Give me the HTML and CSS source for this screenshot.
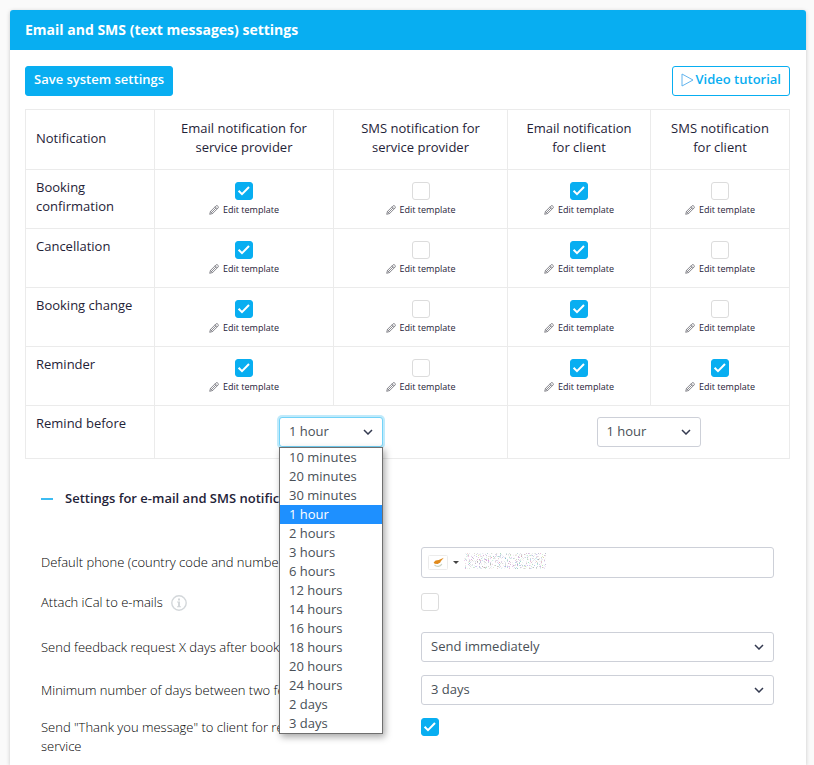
FILE: index.html
```html
<!doctype html>
<html lang="en">
<head>
    <meta charset="utf-8">
    <title>Email and SMS settings</title>
    <meta name="viewport" content="width=device-width, initial-scale=1">
    <link rel="stylesheet" href="styles.css">
</head>

<body>
<svg class="sprite" aria-hidden="true">
    <symbol id="pencil" viewBox="0 0 10 10">
        <path d="M.7 9.3l.8-2.9L7 .9q.9-.7 1.7.1l.4.4q.7.8 0 1.6L3.6 8.5z M1.5 6.4l2.1 2.1 M6.1 1.8l2.1 2.1 M2.6 7.4L7.1 2.9"/>
    </symbol>
</svg>

<main class="panel">
    <h1 class="panel-header">Email and SMS (text messages) settings</h1>

    <form class="panel-body" action="#" method="post">
        <div class="toolbar">
            <button type="submit" class="btn btn-primary">Save system settings</button>
            <a href="#" class="btn btn-outline">
                <svg class="play" viewBox="0 0 13 14"><path d="M1 1v12l11-6z"/></svg>Video tutorial</a>
        </div>

        <table class="notifications">
            <colgroup>
                <col class="col-name">
                <col class="col-email-provider">
                <col class="col-sms-provider">
                <col class="col-email-client">
                <col class="col-sms-client">
            </colgroup>
            <thead>
            <tr>
                <th scope="col" class="name">Notification</th>
                <th scope="col">Email notification for service provider</th>
                <th scope="col">SMS notification for service provider</th>
                <th scope="col">Email notification for&nbsp;client</th>
                <th scope="col">SMS notification for&nbsp;client</th>
            </tr>
            </thead>
            <tbody>
            <tr>
                <th scope="row">Booking confirmation</th>
                <td><input type="checkbox" class="check" aria-label="Booking confirmation, email to provider" checked><a href="#" class="edit"><svg><use href="#pencil"/></svg>Edit template</a></td>
                <td><input type="checkbox" class="check" aria-label="Booking confirmation, SMS to provider"><a href="#" class="edit"><svg><use href="#pencil"/></svg>Edit template</a></td>
                <td><input type="checkbox" class="check" aria-label="Booking confirmation, email to client" checked><a href="#" class="edit"><svg><use href="#pencil"/></svg>Edit template</a></td>
                <td><input type="checkbox" class="check" aria-label="Booking confirmation, SMS to client"><a href="#" class="edit"><svg><use href="#pencil"/></svg>Edit template</a></td>
            </tr>
            <tr>
                <th scope="row">Cancellation</th>
                <td><input type="checkbox" class="check" aria-label="Cancellation, email to provider" checked><a href="#" class="edit"><svg><use href="#pencil"/></svg>Edit template</a></td>
                <td><input type="checkbox" class="check" aria-label="Cancellation, SMS to provider"><a href="#" class="edit"><svg><use href="#pencil"/></svg>Edit template</a></td>
                <td><input type="checkbox" class="check" aria-label="Cancellation, email to client" checked><a href="#" class="edit"><svg><use href="#pencil"/></svg>Edit template</a></td>
                <td><input type="checkbox" class="check" aria-label="Cancellation, SMS to client"><a href="#" class="edit"><svg><use href="#pencil"/></svg>Edit template</a></td>
            </tr>
            <tr>
                <th scope="row">Booking change</th>
                <td><input type="checkbox" class="check" aria-label="Booking change, email to provider" checked><a href="#" class="edit"><svg><use href="#pencil"/></svg>Edit template</a></td>
                <td><input type="checkbox" class="check" aria-label="Booking change, SMS to provider"><a href="#" class="edit"><svg><use href="#pencil"/></svg>Edit template</a></td>
                <td><input type="checkbox" class="check" aria-label="Booking change, email to client" checked><a href="#" class="edit"><svg><use href="#pencil"/></svg>Edit template</a></td>
                <td><input type="checkbox" class="check" aria-label="Booking change, SMS to client"><a href="#" class="edit"><svg><use href="#pencil"/></svg>Edit template</a></td>
            </tr>
            <tr>
                <th scope="row">Reminder</th>
                <td><input type="checkbox" class="check" aria-label="Reminder, email to provider" checked><a href="#" class="edit"><svg><use href="#pencil"/></svg>Edit template</a></td>
                <td><input type="checkbox" class="check" aria-label="Reminder, SMS to provider"><a href="#" class="edit"><svg><use href="#pencil"/></svg>Edit template</a></td>
                <td><input type="checkbox" class="check" aria-label="Reminder, email to client" checked><a href="#" class="edit"><svg><use href="#pencil"/></svg>Edit template</a></td>
                <td><input type="checkbox" class="check" aria-label="Reminder, SMS to client" checked><a href="#" class="edit"><svg><use href="#pencil"/></svg>Edit template</a></td>
            </tr>
            <tr>
                <th scope="row">Remind before</th>
                <td colspan="2">
                    <div class="dropdown">
                        <select class="select select-open" aria-label="Remind provider before">
                            <option>1 hour</option>
                        </select>
                        <ul class="dropdown-menu" role="listbox" aria-label="Remind provider before">
                            <li role="option">10 minutes</li>
                            <li role="option">20 minutes</li>
                            <li role="option">30 minutes</li>
                            <li role="option" class="active" aria-selected="true">1 hour</li>
                            <li role="option">2 hours</li>
                            <li role="option">3 hours</li>
                            <li role="option">6 hours</li>
                            <li role="option">12 hours</li>
                            <li role="option">14 hours</li>
                            <li role="option">16 hours</li>
                            <li role="option">18 hours</li>
                            <li role="option">20 hours</li>
                            <li role="option">24 hours</li>
                            <li role="option">2 days</li>
                            <li role="option">3 days</li>
                        </ul>
                    </div>
                </td>
                <td colspan="2">
                    <div class="dropdown">
                        <select class="select" aria-label="Remind client before">
                            <option>1 hour</option>
                        </select>
                    </div>
                </td>
            </tr>
            </tbody>
        </table>

        <section class="more">
            <h2 class="more-title"><span class="minus"></span>Settings for e-mail and SMS notifications</h2>

            <div class="row">
                <label for="phone">Default phone (country code and number)</label>
                <div class="phone">
                    <button type="button" class="country" aria-label="Country code">
                        <svg class="flag" viewBox="0 0 20 15">
                            <rect x=".5" y=".5" width="19" height="14" rx="1" fill="#fff" stroke="#ececec"/>
                            <path d="M5.6 7.6l2-2 3.2-.5 5-2.3-3 3.4-.5 1.4-2.6 1.3-3-.2z" fill="#e08a1c"/>
                            <path d="M6.5 9.8q1.5 1.8 4 1.5 2.6-.4 3.3-2.4" fill="none" stroke="#c9d3c6" stroke-width="1.3"/>
                        </svg>
                        <span class="caret"></span>
                    </button>
                    <svg class="scramble" aria-hidden="true">
                        <filter id="grain" x="0" y="0" width="100%" height="100%">
                            <feTurbulence type="fractalNoise" baseFrequency="0.9" numOctaves="2" seed="4"/>
                            <feColorMatrix values="1 0 0 0 .1  0 1 0 0 .1  0 0 1 0 .15  0 0 0 8 -4.3"/>
                        </filter>
                        <rect width="100%" height="100%" filter="url(#grain)"/>
                    </svg>
                    <input type="tel" id="phone">
                </div>
            </div>
            <div class="row row-top">
                <span class="with-info">
                    <label for="ical">Attach iCal to e-mails</label>
                    <svg class="info" viewBox="0 0 16 16">
                        <circle cx="8" cy="8" r="7.2"/>
                        <path d="M7 3.5h2v2H7z M6 6.6h3v4.6h1v1H6v-1h1V7.6H6z"/>
                    </svg>
                </span>
                <input type="checkbox" id="ical" class="check">
            </div>
            <div class="row">
                <label for="feedback">Send feedback request X days after booking</label>
                <select id="feedback" class="select">
                    <option>Send immediately</option>
                </select>
            </div>
            <div class="row">
                <label for="min-days">Minimum number of days between two feedback requests</label>
                <select id="min-days" class="select">
                    <option>3 days</option>
                </select>
            </div>
            <div class="row row-top row-last">
                <label for="thanks">Send "Thank you message" to client for reservation of service</label>
                <input type="checkbox" id="thanks" class="check" checked>
            </div>
        </section>
    </form>
</main>
</body>
</html>
```
FILE: styles.css
```css
* {
    box-sizing: border-box;
}

body {
    margin: 0;
    padding: 10px 8px 0 10px;
    background: #fafafa;
    color: #2b3046;
    font-family: "Open Sans", sans-serif;
    font-size: 13px;
    line-height: 19px;
}

a {
    text-decoration: none;
}

.sprite {
    display: none;
}

.panel {
    min-height: calc(100vh - 10px);
    background: #fff;
    border-radius: 3px 3px 0 0;
    box-shadow: 0 1px 4px rgba(0, 0, 0, 0.2);
}

.panel-header {
    margin: 0;
    padding: 10px 15px;
    background: #08aef1;
    border-radius: 3px 3px 0 0;
    color: #fff;
    font-size: 14px;
    font-weight: 700;
    line-height: 20px;
}

.panel-body {
    padding: 16px 16px 0 15px;
}

.toolbar {
    display: flex;
    justify-content: space-between;
    margin-bottom: 13px;
}

.btn {
    display: flex;
    align-items: center;
    height: 30px;
    padding: 0 8px 3px;
    border: 1px solid #08aef1;
    border-radius: 3px;
    font: 600 13px/19px "Open Sans", sans-serif;
    cursor: pointer;
}

.btn-primary {
    background: #08aef1;
    color: #fff;
}

.btn-outline {
    background: #fff;
    color: #08aef1;
}

.play {
    width: 13px;
    height: 14px;
    margin-right: 2px;
    fill: none;
    stroke: #62b4ee;
}

/* notification table */
.notifications {
    width: 100%;
    table-layout: fixed;
    border-collapse: collapse;
}

.col-name {
    width: 129px;
}

.col-email-provider {
    width: 179px;
}

.col-sms-provider {
    width: 174px;
}

.col-email-client {
    width: 143px;
}

.col-sms-client {
    width: 139px;
}

.notifications th,
.notifications td {
    border: 1px solid #ebebeb;
    text-align: center;
    vertical-align: top;
}

.notifications th {
    padding: 8px 10px;
    color: #1f2338;
    font-weight: 400;
}

.notifications thead th {
    padding-bottom: 12px;
    padding-top: 9px;
}

.notifications thead .name {
    padding: 8px 10px 10px;
    text-align: left;
    vertical-align: middle;
}

.notifications tbody th {
    text-align: left;
}

.notifications td {
    padding: 12px 10px 9px;
}

.notifications td[colspan] {
    padding: 11px 10px;
}

.check {
    appearance: none;
    display: block;
    width: 18px;
    height: 18px;
    margin: 0;
    background: #fff;
    border: 1px solid #dcdcdc;
    border-radius: 3px;
}

.check:checked {
    background: #08aef1 url("data:image/svg+xml,%3Csvg xmlns='http://www.w3.org/2000/svg' viewBox='0 0 18 18'%3E%3Cpath d='M3.6 8.8l3.4 3.4 7-7.2' fill='none' stroke='white' stroke-width='2'/%3E%3C/svg%3E") center / 18px 18px;
    border-color: #08aef1;
}

.notifications .check {
    margin: 0 auto;
}

.edit {
    display: flex;
    align-items: center;
    justify-content: center;
    color: #1f2338;
    font-size: 9px;
}

.edit svg {
    width: 10px;
    height: 10px;
    margin-right: 4px;
    fill: none;
    stroke: #6c6c74;
    stroke-width: 0.8;
}

.select {
    appearance: none;
    display: block;
    width: 100%;
    height: 30px;
    padding: 0 30px 2px 9px;
    background: #fff url("data:image/svg+xml,%3Csvg xmlns='http://www.w3.org/2000/svg' viewBox='0 0 10 6'%3E%3Cpath d='M1 1l4 4 4-4' fill='none' stroke='%23343a50' stroke-width='1.5'/%3E%3C/svg%3E") no-repeat right 9px center / 10px 6px;
    border: 1px solid #cdd0d8;
    border-radius: 3px;
    color: #495057;
    font: 13px/19px "Open Sans", sans-serif;
}

.select-open {
    border-color: #74d3f8;
    box-shadow: 0 0 0 2px #bfeafb;
}

.dropdown {
    position: relative;
    width: 104px;
    margin: 0 auto;
}

.dropdown-menu {
    position: absolute;
    top: 100%;
    left: 0;
    z-index: 2;
    width: 100%;
    margin: 0;
    padding: 0;
    background: #fff;
    border: 1px solid #6f6f6f;
    box-shadow: 2px 3px 7px rgba(0, 0, 0, 0.35);
    color: #495057;
    list-style: none;
    text-align: left;
}

.dropdown-menu li {
    padding: 0 9px;
}

.dropdown-menu .active {
    background: #1e90ff;
    color: #fff;
}

/* extra settings */
.more {
    padding: 30px 16px 0;
}

.more-title {
    display: flex;
    align-items: center;
    margin: 0 0 39px;
    color: #1f2338;
    font-size: 13px;
    font-weight: 600;
    line-height: 19px;
}

.minus {
    width: 12px;
    height: 2px;
    margin-right: 12px;
    background: #3dbcf2;
}

.row {
    display: grid;
    grid-template-columns: 380fr 353fr;
    align-items: center;
    margin-bottom: 13px;
}

.row label {
    padding-right: 32px;
    color: #000;
    font-weight: 300;
}

.row-top {
    align-items: start;
    min-height: 28px;
    padding-top: 2px;
}

.row-last {
    margin-bottom: 0;
    padding-top: 0;
}

.row .with-info {
    display: flex;
    align-items: center;
    gap: 8px;
}

.row .with-info label {
    padding: 0;
}

.info {
    width: 16px;
    height: 16px;
    fill: #d3d7da;
}

.info circle {
    fill: none;
    stroke: #d3d7da;
    stroke-width: 1.4;
}

.phone {
    display: flex;
    align-items: center;
    height: 31px;
    padding: 0 6px;
    background: #fff;
    border: 1px solid #cdd0d8;
    border-radius: 3px;
}

.country {
    display: flex;
    align-items: center;
    gap: 5px;
    padding: 0;
    background: none;
    border: 0;
}

.flag {
    width: 20px;
    height: 15px;
}

.caret {
    border: 3px solid transparent;
    border-top-color: #444;
    border-bottom: 0;
}

.scramble {
    flex: none;
    width: 82px;
    height: 16px;
    margin: 0 0 3px 5px;
}

.phone input {
    flex: 1;
    min-width: 0;
    height: 28px;
    padding: 0;
    background: none;
    border: 0;
    outline: 0;
    font: inherit;
}
```
